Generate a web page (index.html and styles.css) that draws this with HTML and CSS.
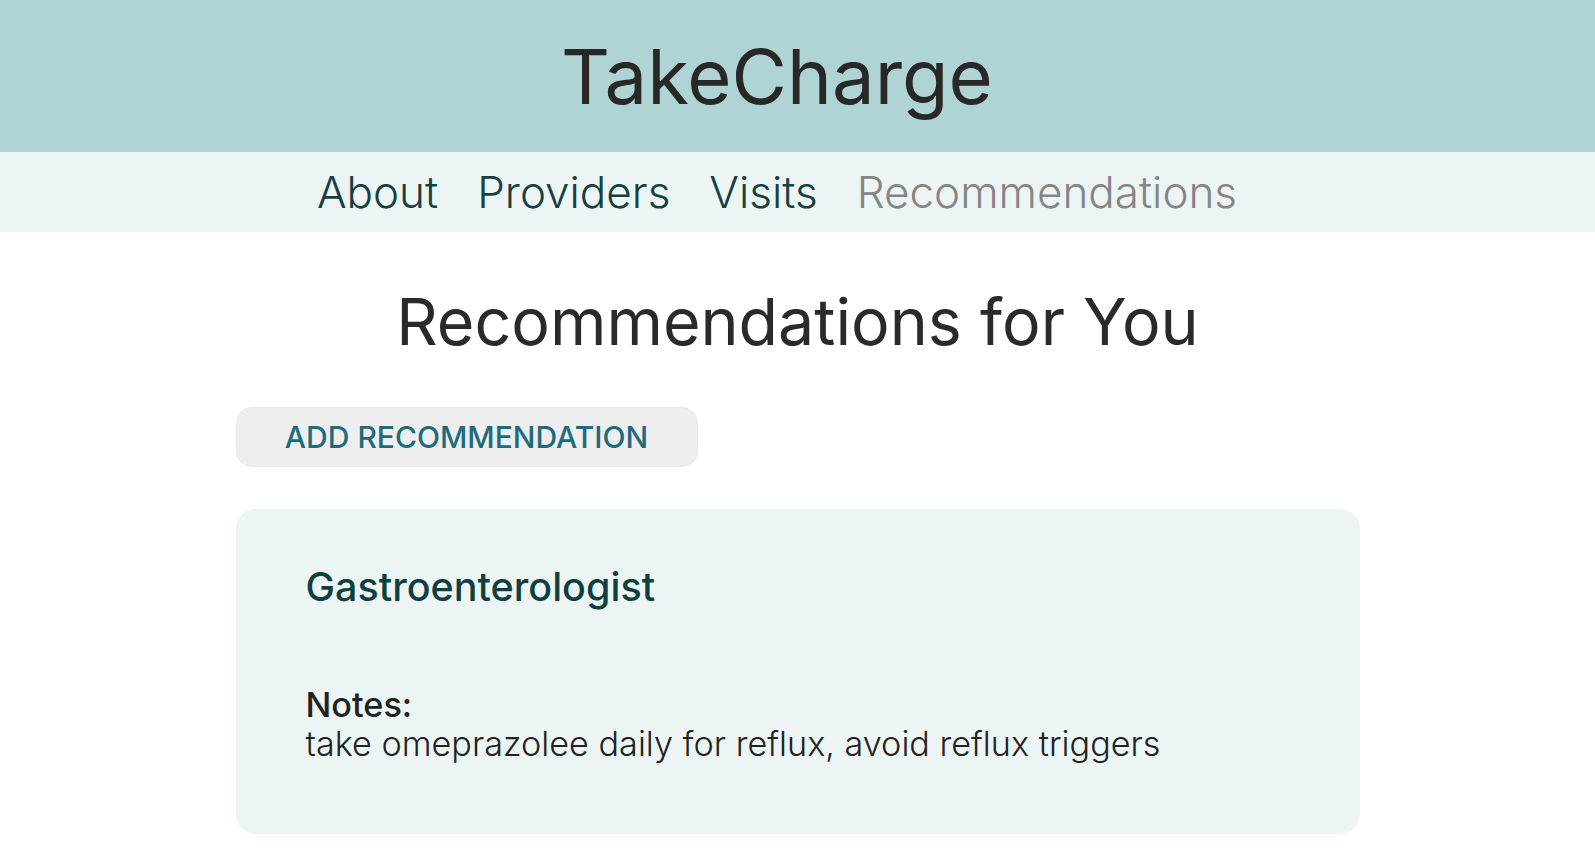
FILE: index.html
```html
<!DOCTYPE html>
<html lang="en">
<head>
<meta charset="utf-8">
<title>TakeCharge</title>
<link rel="stylesheet" href="styles.css">
</head>
<body>
<header class="site-header">
  <h1 class="brand">TakeCharge</h1>
</header>
<nav class="site-nav">
  <a class="nav-link" href="#">About</a>
  <a class="nav-link" href="#">Providers</a>
  <a class="nav-link" href="#">Visits</a>
  <a class="nav-link active" href="#">Recommendations</a>
</nav>
<main class="content">
  <h2 class="page-title">Recommendations for You</h2>
  <div class="actions">
    <button class="add-btn" type="button">ADD RECOMMENDATION</button>
  </div>
  <section class="rec-card">
    <h3 class="rec-title">Gastroenterologist</h3>
    <div class="rec-notes">
      <div class="notes-label">Notes:</div>
      <div class="notes-text">take omeprazolee daily for reflux, avoid reflux triggers</div>
    </div>
  </section>
</main>
</body>
</html>
```

FILE: styles.css
```css
* { box-sizing: border-box; }
html, body { margin: 0; padding: 0; }
body {
  font-family: Inter, "DejaVu Sans", sans-serif;
  background: #ffffff;
  color: #2a2a2a;
}
.site-header {
  height: 152px;
  background: #b0d3d3;
  display: flex;
  align-items: center;
  justify-content: center;
  padding-right: 41px;
}
.brand {
  margin: 0;
  font-size: 76px;
  font-weight: 400;
  line-height: 1;
  color: #282828;
}
.site-nav {
  height: 80px;
  background: #edf5f4;
  display: flex;
  align-items: center;
  justify-content: center;
  gap: 39px;
  padding-right: 41px;
}
.nav-link {
  font-size: 44px;
  font-weight: 300;
  color: #163f42;
  text-decoration: none;
  line-height: 1;
}
.nav-link.active { color: #858585; }
.content {
  width: 1124px;
  margin: 0 auto;
  padding-top: 51px;
}
.page-title {
  margin: 0;
  text-align: center;
  font-size: 64.5px;
  font-weight: 400;
  line-height: 78px;
  color: #2a2a2a;
}
.actions {
  margin-top: 46px;
  display: flex;
}
.add-btn {
  width: 462px;
  height: 60px;
  border: 1px solid #e8e8e8;
  border-radius: 16px;
  background: #eeeeee;
  color: #1d6b7c;
  font-family: Inter, "DejaVu Sans", sans-serif;
  font-size: 30px;
  font-weight: 500;
  padding: 0;
}
.rec-card {
  margin-top: 42px;
  background: #edf5f4;
  border-radius: 20px;
  padding: 54px 70px 71px;
}
.rec-title {
  margin: 0;
  font-size: 39.5px;
  font-weight: 500;
  color: #0f3f40;
  line-height: 48px;
}
.rec-notes {
  margin-top: 74px;
  font-size: 34.2px;
  line-height: 39px;
  color: #222222;
}
.notes-label { font-weight: 500; }
.notes-text { font-weight: 300; }
```
